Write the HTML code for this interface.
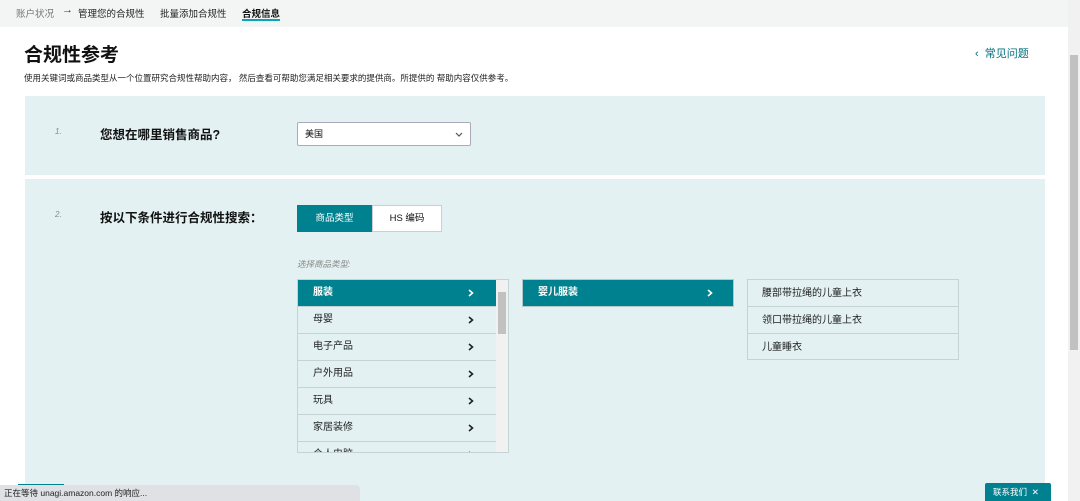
<!DOCTYPE html><html><head><meta charset="utf-8"><style>
*{margin:0;padding:0;box-sizing:border-box}
body{width:1080px;height:501px;overflow:hidden;background:#fff;font-family:"Liberation Sans","Noto Sans CJK SC",sans-serif;color:#111;position:relative;font-size:10px}
.a{position:absolute}
.nav{left:0;top:0;width:1068px;height:27px;background:#f3f5f5}
.panel{background:#e3f1f2;left:25px;width:1020px}
.item{position:absolute;left:0;width:198px;height:27px;border-bottom:1px solid #c5d3d5;padding-left:15px;line-height:26px;font-size:10px;color:#222}
.item svg,.chev{position:absolute;right:22px;top:9px}
.sel{background:#00818f;color:#fff;font-weight:bold}
.r{position:absolute;left:0;width:210px;height:27px;border-bottom:1px solid #c5d3d5;padding-left:14px;line-height:27px;font-size:10px;color:#222}
</style></head><body>
<div class="a nav"></div>
<div class="a" style="left:16px;top:6px;font-size:9.5px;color:#777">账户状况</div>
<div class="a" style="left:62px;top:4px;font-size:11px;color:#333">→</div>
<div class="a" style="left:78px;top:6px;font-size:9.5px;color:#222">管理您的合规性</div>
<div class="a" style="left:160px;top:6px;font-size:9.5px;color:#222">批量添加合规性</div>
<div class="a" style="left:242px;top:6px;font-size:9.5px;color:#111;font-weight:bold">合规信息</div>
<div class="a" style="left:242px;top:19px;width:38px;height:2px;background:#0aa5b5"></div>
<div class="a" style="left:1068px;top:0;width:12px;height:501px;background:#f1f1f1"></div>
<div class="a" style="left:1070px;top:55px;width:8px;height:295px;background:#c1c1c1"></div>
<div class="a" style="left:24px;top:40px;font-size:19px;font-weight:bold;color:#111">合规性参考</div>
<div class="a" style="left:975px;top:45px;font-size:11px;color:#00707e">‹ &nbsp;常见问题</div>
<div class="a" style="left:24px;top:72px;font-size:8.5px;color:#222">使用关键词或商品类型从一个位置研究合规性帮助内容， 然后查看可帮助您满足相关要求的提供商。所提供的 帮助内容仅供参考。</div>
<div class="a panel" style="top:96px;height:79px"></div>
<div class="a panel" style="top:179px;height:322px"></div>
<div class="a" style="left:55px;top:127px;font-size:8px;color:#888;font-style:italic">1.</div>
<div class="a" style="left:100px;top:124px;font-size:12.5px;font-weight:bold">您想在哪里销售商品?</div>
<div class="a" style="left:297px;top:122px;width:174px;height:24px;background:#fff;border:1px solid #aab;border-radius:2px;padding-left:7px;line-height:22px;font-size:9px">美国<svg style="position:absolute;right:7px;top:9px" width="8" height="5"><path d="M1 1L4 4L7 1" fill="none" stroke="#555" stroke-width="1.2"/></svg></div>
<div class="a" style="left:55px;top:210px;font-size:8px;color:#888;font-style:italic">2.</div>
<div class="a" style="left:100px;top:207px;font-size:12.5px;font-weight:bold">按以下条件进行合规性搜索：</div>
<div class="a" style="left:297px;top:205px;width:75px;height:27px;background:#00818f;color:#fff;font-size:9.5px;text-align:center;line-height:27px">商品类型</div>
<div class="a" style="left:372px;top:205px;width:70px;height:27px;background:#fff;border:1px solid #ccd;font-size:9.5px;text-align:center;line-height:25px">HS 编码</div>
<div class="a" style="left:297px;top:258px;font-size:8.5px;color:#888;font-style:italic">选择商品类型:</div>
<div class="a" style="left:297px;top:279px;width:212px;height:174px;border:1px solid #c5d3d5;overflow:hidden">
<div class="item sel" style="top:0">服装<svg width="6" height="8"><path d="M1 1L4.5 4L1 7" fill="none" stroke="#fff" stroke-width="1.6"/></svg></div>
<div class="item" style="top:27px">母婴<svg width="6" height="8"><path d="M1 1L4.5 4L1 7" fill="none" stroke="#222" stroke-width="1.6"/></svg></div>
<div class="item" style="top:54px">电子产品<svg width="6" height="8"><path d="M1 1L4.5 4L1 7" fill="none" stroke="#222" stroke-width="1.6"/></svg></div>
<div class="item" style="top:81px">户外用品<svg width="6" height="8"><path d="M1 1L4.5 4L1 7" fill="none" stroke="#222" stroke-width="1.6"/></svg></div>
<div class="item" style="top:108px">玩具<svg width="6" height="8"><path d="M1 1L4.5 4L1 7" fill="none" stroke="#222" stroke-width="1.6"/></svg></div>
<div class="item" style="top:135px">家居装修<svg width="6" height="8"><path d="M1 1L4.5 4L1 7" fill="none" stroke="#222" stroke-width="1.6"/></svg></div>
<div class="item" style="top:162px">个人电脑<svg width="6" height="8"><path d="M1 1L4.5 4L1 7" fill="none" stroke="#222" stroke-width="1.6"/></svg></div>
<div class="a" style="left:198px;top:0;width:12px;height:172px;background:#f1f1f1"></div>
<div class="a" style="left:200px;top:12px;width:8px;height:42px;background:#c1c1c1"></div>
</div>
<div class="a" style="left:522px;top:279px;width:212px;height:28px;background:#00818f;border:1px solid #b5c8ca;color:#fff;font-weight:bold;font-size:10px;line-height:26px;padding-left:15px">婴儿服装<svg class="chev" width="6" height="8" style="right:20px"><path d="M1 1L4.5 4L1 7" fill="none" stroke="#fff" stroke-width="1.6"/></svg></div>
<div class="a" style="left:747px;top:279px;width:212px;height:81px;border:1px solid #c5d3d5;overflow:hidden">
<div class="r" style="top:0">腰部带拉绳的儿童上衣</div>
<div class="r" style="top:27px">领口带拉绳的儿童上衣</div>
<div class="r" style="top:54px;border:none">儿童睡衣</div>
</div>
<div class="a" style="left:340px;top:489px;font-size:8.5px;color:#888;font-style:italic">类型:</div>
<div class="a" style="left:18px;top:484px;width:46px;height:6px;background:#00818f"></div>
<div class="a" style="left:0;top:485px;width:360px;height:16px;background:#dfe1e4;border-top-right-radius:4px;font-size:8.5px;color:#222;line-height:16px;padding-left:4px">正在等待 unagi.amazon.com 的响应...</div>
<div class="a" style="left:985px;top:483px;width:66px;height:18px;background:#00818f;color:#fff;font-size:8.5px;line-height:18px;padding-left:8px;border-radius:2px 2px 0 0">联系我们 &nbsp;✕</div>
</body></html>
